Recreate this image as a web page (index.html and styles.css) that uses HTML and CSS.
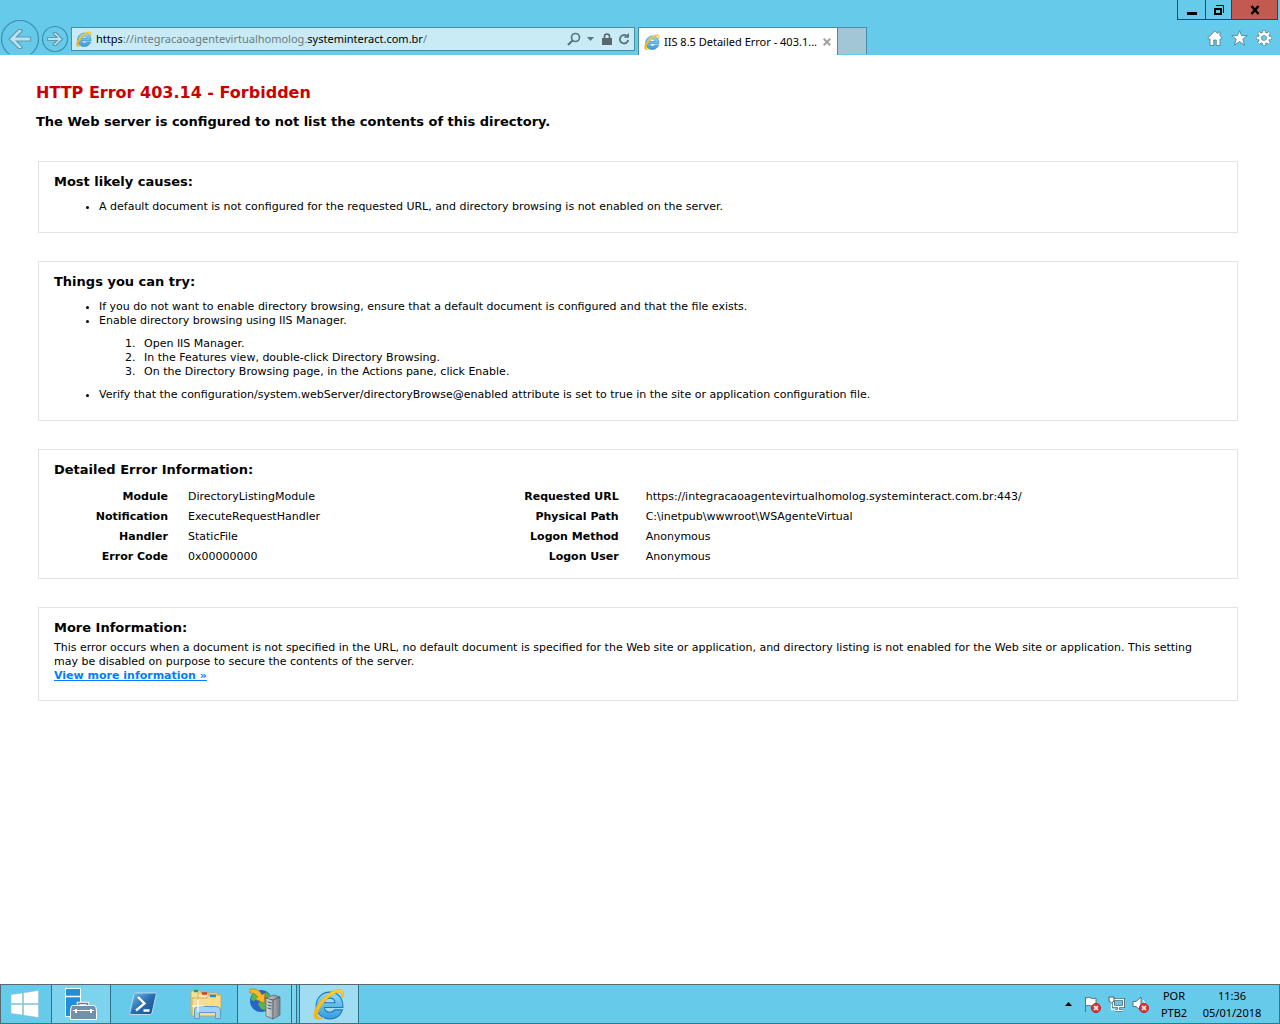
FILE: index.html
```html
<!DOCTYPE html>
<html lang="en">
<head>
<meta charset="utf-8">
<meta name="viewport" content="width=device-width, initial-scale=1">
<title>IIS 8.5 Detailed Error - 403.14 - Forbidden</title>
<link rel="stylesheet" href="styles.css">
</head>
<body>
<svg width="0" height="0" class="defs" aria-hidden="true">
  <defs>
    <linearGradient id="ie-blue" x1="0" y1="0" x2="0" y2="1"><stop offset="0" stop-color="#8fdcfa"/><stop offset="1" stop-color="#3a9ade"/></linearGradient>
    <linearGradient id="ie-gold" x1="0" y1="1" x2="1" y2="0"><stop offset="0" stop-color="#f4b400"/><stop offset="1" stop-color="#ffd84a"/></linearGradient>
    <linearGradient id="ps-blue" x1="0" y1="0" x2="1" y2="1"><stop offset="0" stop-color="#7cc3ea"/><stop offset=".5" stop-color="#2a6db0"/><stop offset="1" stop-color="#1a4c8a"/></linearGradient>
    <linearGradient id="steel" x1="0" y1="0" x2="1" y2="0"><stop offset="0" stop-color="#d8dcdf"/><stop offset="1" stop-color="#777e84"/></linearGradient>
    <symbol id="ie" viewBox="1 0 30 31">
      <path d="M29.500 18.800H11.500c.3 3 2.300 4.700 5.300 4.700 2 0 3.500-.8 4.500-2.300h7.700c-1.800 5.300-6.300 8.800-12.200 8.800C9.300 30 3.500 24.500 3.500 17.200 3.500 9.700 9.300 4 16.700 4c7.700 0 13.100 5.600 12.800 14.800zM11.500 14.200h10.300c-.3-2.700-2.200-4.400-5-4.400-2.900 0-4.800 1.700-5.300 4.400z" fill="url(#ie-blue)" stroke="#1b78bd" stroke-width="1"/>
      <path d="M29.500 9c.9-3.600.3-6.200-2-7.200C23.600.2 15.800 4.300 9.300 11.200 2.700 18.300-.2 26.300 2.600 29.200c1.500 1.500 4.600 1.100 8-.7-2.500.7-4.300.6-5.200-.5-2-2.500 1-9.300 6.800-15.400C18 6.500 24.500 2.900 27.200 4.300c1.300.7 1.700 2.300 1.300 4.500z" fill="url(#ie-gold)" stroke="#f0b21a" stroke-width=".9"/>
    </symbol>
    <symbol id="blocked" viewBox="0 0 10 10"><circle cx="5" cy="5" r="4.500" fill="#e03a35" stroke="#bd1d1d"/><path d="m3 3 4 4m0-4L3 7" stroke="#fff" stroke-width="1.500"/></symbol>
  </defs>
</svg>

<header class="chrome">
  <div class="window-controls">
    <button class="win-btn" aria-label="Minimize"><svg width="12" height="12"><path d="M1 8h10v3H1z"/></svg></button>
    <button class="win-btn" aria-label="Restore"><svg width="12" height="12" fill="none" stroke="#000"><path d="M2 5h6v5H2z" stroke-width="2"/><path d="M3 1.500h7.500V9"/></svg></button>
    <button class="win-btn win-close" aria-label="Close"><svg width="12" height="12"><path d="m2.500 2 7 8m0-8-7 8" stroke="#000" stroke-width="2.400"/></svg></button>
  </div>
  <div class="nav-row">
    <button class="nav-btn" aria-label="Back"><svg width="40" height="34" fill="none" stroke="#3c8fa9" stroke-width="1.200"><circle cx="20" cy="19" r="18.500"/><path d="M9 19 18.500 9.500h3.500v2l-5.500 5.500H30.500v4H16.500l5.500 5.500v2h-3.500z" fill="#b5e4f4" stroke="#6499ac"/></svg></button>
    <button class="nav-btn" aria-label="Forward"><svg width="29" height="34" fill="none" stroke="#3c8fa9" stroke-width="1.200"><circle cx="15" cy="19" r="12.500"/><path d="m22.500 19-6.500 6.500h-2.500V24l3.500-3.500H7.500v-3H17L13.500 14v-1.500H16z" fill="#b5e4f4" stroke="#6499ac"/></svg></button>
    <div class="address">
      <svg width="16" height="16" aria-hidden="true"><use href="#ie"/></svg>
      <div class="url" role="textbox" contenteditable="true" spellcheck="false" aria-label="Address"><b>https</b>://integracaoagentevirtualhomolog.<b>systeminteract.com.br</b>/</div>
      <button class="tool" aria-label="Search"><svg width="14" height="14" fill="none" stroke="#59777f" stroke-width="1.700"><circle cx="8.500" cy="5.500" r="4"/><path d="m5.500 8.500-4.500 4.500" stroke-width="2.200"/></svg></button>
      <button class="tool" aria-label="Show address list"><svg width="7" height="4"><path d="M0 0h7L3.500 4z" fill="#59777f"/></svg></button>
      <button class="tool lock" aria-label="Security report"><svg width="10" height="12"><path d="M0 5h10v7H0z" fill="#59686e"/><path d="M2.500 6V3.500a2.500 2.500 0 0 1 5 0V6" fill="none" stroke="#59686e" stroke-width="1.600"/></svg></button>
      <button class="tool" aria-label="Refresh"><svg width="12" height="12"><path d="M8.500 2.800A4.200 4.200 0 1 0 10.200 7" fill="none" stroke="#59777f" stroke-width="1.900"/><path d="M5.500 4.800h5.500V0z" fill="#59777f"/></svg></button>
    </div>
    <div class="tab">
      <svg width="16" height="16" aria-hidden="true"><use href="#ie"/></svg>
      <span class="tab-title">IIS 8.5 Detailed Error - 403.1...</span>
      <button class="tool" aria-label="Close tab"><svg width="8" height="8"><path d="m.7.7 6.600 6.600m0-6.600L.7 7.300" stroke="#a2a2a2" stroke-width="2"/></svg></button>
    </div>
    <button class="new-tab" aria-label="New tab"></button>
    <div class="browser-tools">
      <button class="tool" aria-label="Home"><svg width="16" height="16"><path d="M8 .8.7 8l1.500 1.400.8-.6v6.700h3.800V10h2.400v5.500H13V8.800l.8.600L15.300 8 13 5.700V2h-2.200v1.600z" fill="#fff" stroke="#4c8496" stroke-width=".9"/></svg></button>
      <button class="tool" aria-label="Favorites"><svg width="17" height="16"><path d="m8.500.7 2.100 5h5.700l-4.500 3.500 1.800 6-5.100-3.700-5.100 3.700 1.800-6L.7 5.700h5.700z" fill="#fff" stroke="#4c8496" stroke-width=".9"/></svg></button>
      <button class="tool" aria-label="Tools"><svg width="16" height="16" viewBox="-8 -8 16 16"><path d="M0-7.800V-4M0 7.800V4M-7.800 0H-4M7.800 0H4M-5.500-5.500l2.700 2.700M5.500-5.500 2.800-2.800M-5.500 5.500l2.700-2.700M5.500 5.500 2.800 2.800" stroke="#4c8496" stroke-width="3.600"/><circle r="4.200" fill="none" stroke="#4c8496" stroke-width="4"/><path d="M0-7.300V-4M0 7.300V4M-7.300 0H-4M7.300 0H4M-5.200-5.200l2.400 2.400M5.200-5.200 2.800-2.800M-5.200 5.200l2.400-2.400M5.200 5.200 2.800 2.800" stroke="#fff" stroke-width="2.300"/><circle r="4.100" fill="none" stroke="#fff" stroke-width="2.600"/></svg></button>
    </div>
  </div>
</header>

<main class="page">
  <h1>HTTP Error 403.14 - Forbidden</h1>
  <h2>The Web server is configured to not list the contents of this directory.</h2>

  <section class="card">
    <h3>Most likely causes:</h3>
    <ul>
      <li>A default document is not configured for the requested URL, and directory browsing is not enabled on the server.</li>
    </ul>
  </section>

  <section class="card">
    <h3>Things you can try:</h3>
    <ul>
      <li>If you do not want to enable directory browsing, ensure that a default document is configured and that the file exists.</li>
      <li>Enable directory browsing using IIS Manager.
        <ol>
          <li>Open IIS Manager.</li>
          <li>In the Features view, double-click Directory Browsing.</li>
          <li>On the Directory Browsing page, in the Actions pane, click Enable.</li>
        </ol>
      </li>
      <li>Verify that the configuration/system.webServer/directoryBrowse@enabled attribute is set to true in the site or application configuration file.</li>
    </ul>
  </section>

  <section class="card card-details">
    <h3>Detailed Error Information:</h3>
    <div class="details">
      <table class="details-left">
        <tr><th scope="row">Module</th><td>DirectoryListingModule</td></tr>
        <tr><th scope="row">Notification</th><td>ExecuteRequestHandler</td></tr>
        <tr><th scope="row">Handler</th><td>StaticFile</td></tr>
        <tr><th scope="row">Error Code</th><td>0x00000000</td></tr>
      </table>
      <table class="details-right">
        <tr><th scope="row">Requested URL</th><td>https://integracaoagentevirtualhomolog.systeminteract.com.br:443/</td></tr>
        <tr><th scope="row">Physical Path</th><td>C:\inetpub\wwwroot\WSAgenteVirtual</td></tr>
        <tr><th scope="row">Logon Method</th><td>Anonymous</td></tr>
        <tr><th scope="row">Logon User</th><td>Anonymous</td></tr>
      </table>
    </div>
  </section>

  <section class="card card-more">
    <h3>More Information:</h3>
    <p>This error occurs when a document is not specified in the URL, no default document is specified for the Web site or application, and directory listing is not enabled for the Web site or application. This setting may be disabled on purpose to secure the contents of the server.</p>
    <a href="#">View more information »</a>
  </section>
</main>

<footer class="taskbar">
  <button class="task start" aria-label="Start"><svg width="28" height="28"><path d="M0 4.500 11.500 3v10.500H0zM12.500 2.800 27.500.5v13h-15zM0 14.500h11.500V25L0 23.500zM12.500 14.500h15v13l-15-2.300z" fill="#fff" stroke="#8eb8c6" stroke-width=".5"/></svg></button>
  <button class="task open" aria-label="Server Manager"><svg width="32" height="32"><path d="M.5.500h15v28H.5z" fill="#1f8edb" stroke="#fff"/><path d="M.5 8.500h15" stroke="#fff" stroke-width="1.500"/><path d="M13.500 18v-2.500h9V18" fill="none" stroke="#fff" stroke-width="3.500"/><path d="M13.500 18v-2.500h9V18" fill="none" stroke="#66808f" stroke-width="1.600"/><path d="M7.500 17.500h21q2 0 2.500 2l.5 4v8h-26v-8l.5-4q.5-2 1.500-2z" fill="#7390a8" stroke="#fff"/><path d="M8 22.500h21" stroke="#fff"/><path d="M11 21v4m15-4v4" stroke="#fff" stroke-width="2"/></svg></button>
  <button class="task" aria-label="Windows PowerShell"><svg width="28" height="24"><path d="M6.500 1h20q1 0 .8 1.200L23 21q-.4 1.500-2 1.500H2q-1.500 0-1.200-1.500L5 2.200Q5.300 1 6.500 1z" fill="url(#ps-blue)" stroke="#b9dcee"/><path d="m9 5 6.500 6.500L7 18.500M14.500 18.500h6" fill="none" stroke="#fff" stroke-width="2.300"/></svg></button>
  <button class="task" aria-label="File Explorer"><svg width="32" height="32"><g stroke="#c9a64a" stroke-width=".8"><path d="M1 3h10l1 2h16v21H1z" fill="#f7e19a"/><path d="M8 5h10l1 2h11v20H8z" fill="#f9e7a8"/><path d="M2 10h15l2-3h12v21H2z" fill="#f5dd92"/></g><path d="M4 3h4" stroke="#22a548" stroke-width="2.500"/><path d="M12 5.500h5" stroke="#d7392f" stroke-width="2.500"/><path d="M20 8h6" stroke="#3189d4" stroke-width="2.500"/><path d="M4.500 30.500V23q0-4.500 5-4.500h16q5 0 5 4.500v7.500h-5v-6h-16v6z" fill="#9fd5ee" stroke="#569fc8"/><path d="M8 12v12M2 18h12" stroke="#fff" stroke-width="1.200"/></svg></button>
  <button class="task open iis" aria-label="Internet Information Services Manager"><svg width="32" height="32"><circle cx="12" cy="13" r="11" fill="#2465c5"/><path d="M3 7q4-5 8-2l-2 5-4 3-3-1zm9 5 5-1 3 4-4 7-4-1-3-5zM17 4l5 4-1 4-5-3z" fill="#59b547"/><path d="M1 1q9-1 12 6l3-2-1 10-9-4 3-2Q6 4 1 5z" fill="#f7ba2b" stroke="#bb7b12" stroke-width=".7"/><path d="m17 10 8-3 6 2v18l-7 4-7-3z" fill="url(#steel)" stroke="#62696e" stroke-width=".8"/><path d="m17 10 7 2v19m0-19 7-3M18.500 14l4 1m-4 2 4 1m-4 2 4 1" fill="none" stroke="#4f565b" stroke-width=".9"/></svg></button>
  <span class="task-stack"></span>
  <button class="task active" aria-label="Internet Explorer"><svg width="32" height="32"><use href="#ie"/></svg></button>
  <div class="tray">
    <button class="tool" aria-label="Show hidden icons"><svg width="7" height="4"><path d="M0 4 3.500 0 7 4z"/></svg></button>
    <button class="tool" aria-label="Action Center"><svg width="17" height="17"><path d="M1.500 1v15M2 2q3-1.500 5 0t5 0v8q-3 1.500-5 0t-5 0" fill="#fff" stroke="#59717a"/><use href="#blocked" x="7" y="7" width="10" height="10"/></svg></button>
    <button class="tool" aria-label="Network"><svg width="17" height="17"><path d="M5.500 3.500h10v7h-10zM7 14.500h8M10.500 11v3" fill="#6ac5e3" stroke="#41636f" stroke-width="3"/><path d="M5.500 3.500h10v7h-10zM7 14.500h8M10.500 11v3M3.500 7v6.500H7" fill="none" stroke="#fff" stroke-width="1.300"/><path d="M1 1h5v4L3.500 7 1 5z" fill="#fff" stroke="#41636f"/></svg></button>
    <button class="tool" aria-label="Volume muted"><svg width="17" height="17"><path d="M1 5.500h3L9 1v14l-5-4.500H1z" fill="#fff" stroke="#59717a"/><path d="M11 4q3 3 1 7" fill="none" stroke="#fff"/><use href="#blocked" x="7" y="7" width="10" height="10"/></svg></button>
    <button class="tray-text lang"><span>POR</span><span>PTB2</span></button>
    <button class="tray-text clock"><span>11:36</span><span>05/01/2018</span></button>
  </div>
</footer>
</body>
</html>
```
FILE: styles.css
```css
* { box-sizing: border-box; }

body {
  margin: 0;
  min-height: 100vh;
  display: flex;
  flex-direction: column;
  background: #fff;
  color: #000;
  font: 11px/14px Verdana, "DejaVu Sans", sans-serif;
}

button {
  margin: 0;
  padding: 0;
  border: 0;
  background: none;
  color: inherit;
  font: inherit;
}

svg { display: block; flex: none; }
.defs { position: absolute; }

/* Browser frame */
.chrome {
  background: #66caea;
  font: 11px/16px "Segoe UI", "Noto Sans", sans-serif;
}
.window-controls {
  display: flex;
  justify-content: flex-end;
  height: 20px;
  padding-right: 2px;
}
.win-btn {
  display: flex;
  align-items: center;
  justify-content: center;
  width: 26px;
  border: 1px solid #22485a;
  border-top: 0;
  border-right: 0;
}
.win-btn:first-child { width: 28px; }
.win-btn.win-close {
  width: 47px;
  border-right: 1px solid #22485a;
  background: #c35a50;
}
.nav-row { display: flex; height: 35px; }
.nav-btn { flex: none; align-self: flex-start; }
.address {
  flex: 0 1 564px;
  min-width: 0;
  display: flex;
  align-items: center;
  gap: 6px;
  height: 24px;
  margin: 7px 3px 0 2px;
  padding: 0 4px;
  border: 1px solid #458fa6;
  background: #c9ebf6;
}
.url {
  flex: 1;
  min-width: 0;
  margin-left: -2px;
  overflow: hidden;
  white-space: nowrap;
  color: #6b7b81;
}
.url b { font-weight: 400; color: #000; }
.lock { margin-left: 2px; }
.tab {
  display: flex;
  align-items: center;
  gap: 4px;
  width: 200px;
  margin-top: 7px;
  padding: 0 6px 0 5px;
  border: 1px solid #458fa6;
  border-bottom: 0;
  background: #fff;
}
.tab-title { flex: 1; white-space: nowrap; }
.new-tab {
  width: 29px;
  margin: 7px 0 1px;
  border: 1px solid #458fa6;
  border-width: 1px 1px 0 0;
  background: #a2c6d5;
}
.browser-tools {
  display: flex;
  align-items: center;
  gap: 8px;
  margin-left: auto;
  padding-right: 8px;
}

/* Error page */
.page { flex: 1; padding: 28px 42px 28px 38px; }
h1, h2, h3, p, ul, ol { margin: 0; }
h1, h2 { margin-left: -2px; line-height: 20px; }
h1 { color: #c00; font-size: 16px; }
h2 { margin-top: 9px; margin-bottom: 29px; font-size: 13px; }
h3 { font-size: 13px; line-height: 20px; }
.card {
  padding: 10px 18px 18px 15px;
  border: 1px solid #e3e3e3;
}
.card + .card { margin-top: 28px; }
ul { margin-top: 8px; padding-left: 45px; }
ol { margin: 9px 0; padding-left: 40px; }
ol li { padding-left: 5px; }
.card p { margin-top: 3px; }
.card a { color: #007eff; font-weight: 700; }
.card-details { padding-bottom: 11px; }
.card-more { padding-bottom: 17px; }
.details { display: flex; margin-top: 7px; }
.details-left { flex: 0 0 38%; }
.details-right { flex: 1; }
table { border-collapse: collapse; table-layout: fixed; }
th, td { height: 20px; padding: 0; text-align: left; }
th { padding-right: 20px; text-align: right; white-space: nowrap; }
.details-left th { width: 134px; }
.details-right th { width: 149px; padding-right: 27px; }

/* Taskbar */
.taskbar {
  display: flex;
  height: 40px;
  border: 1px solid #566a72;
  background: #66caea;
  font: 11px/17px "Segoe UI", "Noto Sans", sans-serif;
}
.task {
  display: flex;
  align-items: center;
  justify-content: center;
  width: 63px;
}
.task.start { width: 50px; padding-right: 2px; }
.task.open {
  width: 60px;
  border: 1px solid #2b6f88;
  border-width: 0 1px;
  background: #7cd3ee;
}
.task.iis { width: 55px; }
.task-stack {
  width: 5px;
  border-right: 1px solid #2b6f88;
  background: #7cd3ee;
}
.task.active {
  width: 60px;
  margin-left: 2px;
  border: 1px solid #2b6f88;
  border-width: 0 1px;
  background: #a0ddf2;
}
.tray {
  display: flex;
  align-items: center;
  gap: 7px;
  margin-left: auto;
  padding-right: 17px;
}
.tray .tool:first-child { margin-right: 5px; }
.tray-text {
  display: flex;
  flex-direction: column;
  align-items: center;
}
.lang { width: 36px; }
.clock { width: 60px; margin-left: 3px; }
```
